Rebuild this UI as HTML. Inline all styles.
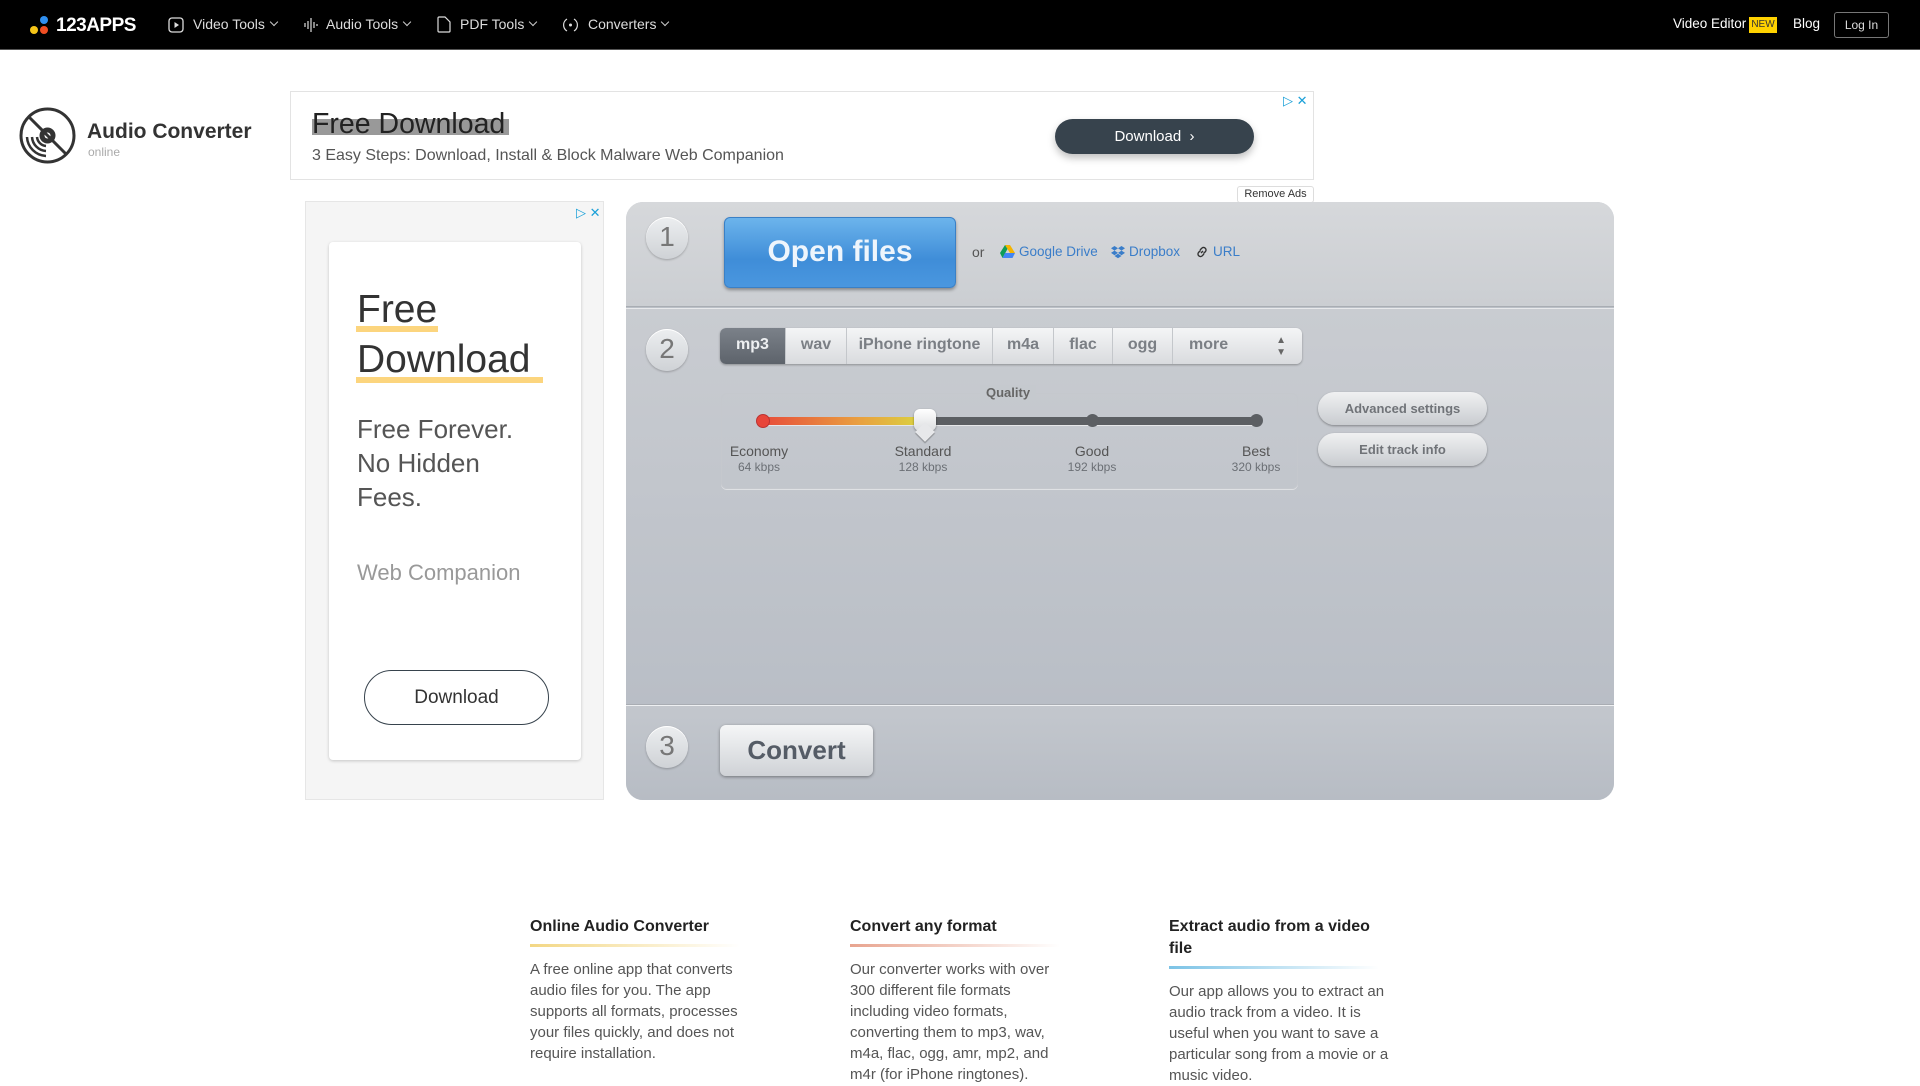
<!DOCTYPE html>
<html><head><meta charset="utf-8">
<style>
*{box-sizing:border-box;margin:0;padding:0}
body{width:1920px;height:1080px;overflow:hidden;background:#fff;font-family:"Liberation Sans",sans-serif;position:relative}
.abs{position:absolute}
.nav{left:0;top:0;width:1920px;height:50px;background:#000;border-bottom:1px solid #555}
.nav .it{position:absolute;top:16px;color:#ddd;font-size:14px;white-space:nowrap}
.chev{display:inline-block;width:6px;height:6px;border-right:1px solid #ccc;border-bottom:1px solid #ccc;transform:rotate(45deg);margin-left:6px;position:relative;top:-4px}
.step{position:absolute;left:646px;width:42px;height:42px;border-radius:50%;background:linear-gradient(#eceef0,#cfd2d6);box-shadow:0 1px 2px rgba(0,0,0,.25),inset 0 1px 0 #fff;color:#777;font-size:28px;text-align:center;line-height:40px}
.tab{position:absolute;top:0;height:36px;line-height:34px;text-align:center;font-size:16px;font-weight:bold;color:#7b7f85;border-right:1px solid #c4c7cb}
.lbl{position:absolute;text-align:center;width:120px;color:#555;font-size:14px;line-height:16px}
.lbl small{display:block;font-size:12px;color:#6b6f75}
.pill{position:absolute;left:1318px;width:169px;height:33px;border-radius:17px;background:linear-gradient(#f0f1f2,#c9ccd0);box-shadow:0 1px 2px rgba(0,0,0,.35);font-size:13px;font-weight:bold;color:#707378;text-align:center;line-height:33px}
.col{position:absolute;width:220px;font-size:15px;line-height:21px;color:#555}
.col h3{font-size:16px;color:#222;font-weight:bold;line-height:22px}
.col .ul{height:3px;margin:6px 0 12px;width:210px}
</style></head><body>

<div class="abs nav">
  <div class="abs" style="left:40px;top:16px;width:8px;height:8px;border-radius:50%;background:#2f8ff0"></div>
  <div class="abs" style="left:30px;top:26px;width:8px;height:8px;border-radius:50%;background:#f5c518"></div>
  <div class="abs" style="left:40px;top:26px;width:8px;height:8px;border-radius:50%;background:#f04e23"></div>
  <div class="abs" style="left:56px;top:15px;color:#fff;font-size:19px;font-weight:bold;letter-spacing:-0.5px">123APPS</div>
  <svg class="abs" style="left:168px;top:17px" width="16" height="16" viewBox="0 0 16 16"><rect x="1" y="1" width="14" height="14" rx="3" fill="none" stroke="#ddd" stroke-width="1.3"/><path d="M6.5 5v6l4.5-3z" fill="#ddd"/></svg>
  <div class="it" style="left:193px">Video Tools<span class="chev"></span></div>
  <svg class="abs" style="left:304px;top:17px" width="14" height="16" viewBox="0 0 14 16"><path d="M1 6v4M4 4v8M7 1v14M10 5v6M13 7v2" stroke="#ddd" stroke-width="1.2"/></svg>
  <div class="it" style="left:326px">Audio Tools<span class="chev"></span></div>
  <svg class="abs" style="left:437px;top:16px" width="14" height="17" viewBox="0 0 14 17"><path d="M1 2a1 1 0 0 1 1-1h6l5 5v9a1 1 0 0 1-1 1H2a1 1 0 0 1-1-1z" fill="none" stroke="#ddd" stroke-width="1.2"/></svg>
  <div class="it" style="left:460px">PDF Tools<span class="chev"></span></div>
  <svg class="abs" style="left:562px;top:16px" width="17" height="18" viewBox="0 0 17 18"><path d="M12 3a7 7 0 0 1 0 12M5 15A7 7 0 0 1 5 3" fill="none" stroke="#ddd" stroke-width="1.2"/><circle cx="8.5" cy="9" r="1.5" fill="#ddd"/></svg>
  <div class="it" style="left:588px">Converters<span class="chev"></span></div>
  <div class="it" style="left:1673px;color:#fff;font-size:13.5px">Video Editor</div>
  <div class="abs" style="left:1749px;top:17px;width:28px;height:16px;background:#ffd200;color:#333;font-size:10px;line-height:16px;text-align:center">NEW</div>
  <div class="it" style="left:1793px;color:#fff;font-size:13.5px">Blog</div>
  <div class="abs" style="left:1834px;top:12px;width:55px;height:26px;border:1px solid #777;border-radius:3px;color:#ddd;font-size:12px;text-align:center;line-height:24px">Log In</div>
</div>

<!-- logo -->
<svg class="abs" style="left:19px;top:107px" width="57" height="57" viewBox="0 0 57 57"><circle cx="28.5" cy="28.5" r="26.5" fill="none" stroke="#333" stroke-width="3"/><circle cx="28.5" cy="28.5" r="8" fill="#333"/><circle cx="28.5" cy="28.5" r="3" fill="#fff"/><path d="M10 10L47 47" stroke="#333" stroke-width="3"/><path d="M8 30a20 20 0 0 0 19 19M13 30a15 15 0 0 0 14 14M18 30a10 10 0 0 0 9 9" fill="none" stroke="#333" stroke-width="2.5"/></svg>
<div class="abs" style="left:87px;top:120px;font-size:21px;font-weight:bold;color:#333">Audio Converter</div>
<div class="abs" style="left:88px;top:145px;font-size:12px;color:#aaa">online</div>

<!-- top ad -->
<div class="abs" style="left:290px;top:91px;width:1024px;height:89px;border:1px solid #e3e3e3;background:#fff">
  <div class="abs" style="left:21px;top:27px;width:197px;height:16px;background:#999"></div>
  <div class="abs" style="left:21px;top:16px;font-size:28.5px;color:#222">Free Download</div>
  <div class="abs" style="left:21px;top:55px;font-size:16px;color:#555">3 Easy Steps: Download, Install &amp; Block Malware Web Companion</div>
  <div class="abs" style="left:764px;top:27px;width:199px;height:35px;border-radius:18px;background:#37434d;box-shadow:0 4px 8px rgba(0,0,0,.25);color:#fff;font-size:15px;text-align:center;line-height:35px">Download &nbsp;›</div>
  <div class="abs" style="left:992px;top:1px;color:#1ba0d8;font-size:13px">▷ ✕</div>
</div>
<div class="abs" style="left:1237px;top:186px;width:77px;height:17px;border:1px solid #ddd;border-radius:3px;font-size:11px;color:#333;text-align:center;line-height:15px">Remove Ads</div>

<!-- left ad -->
<div class="abs" style="left:305px;top:201px;width:299px;height:599px;background:#f5f5f5;border:1px solid #e6e6e6">
  <div class="abs" style="left:270px;top:3px;color:#1ba0d8;font-size:13px">▷ ✕</div>
  <div class="abs" style="left:23px;top:40px;width:252px;height:518px;background:#fff;border-radius:4px;box-shadow:0 1px 3px rgba(0,0,0,.2)">
    <div class="abs" style="left:27px;top:84px;width:82px;height:6px;background:#fcd57e"></div>
    <div class="abs" style="left:27px;top:135px;width:187px;height:6px;background:#fcd57e"></div>
    <div class="abs" style="left:28px;top:43px;font-size:39px;line-height:50px;color:#333">Free<br>Download</div>
    <div class="abs" style="left:28px;top:170px;font-size:26px;line-height:34px;color:#555">Free Forever.<br>No Hidden<br>Fees.</div>
    <div class="abs" style="left:28px;top:318px;font-size:22px;color:#999">Web Companion</div>
    <div class="abs" style="left:35px;top:428px;width:185px;height:55px;border:1px solid #37434d;border-radius:28px;font-size:19px;text-align:center;line-height:53px;color:#333">Download</div>
  </div>
</div>

<!-- converter -->
<div class="abs" style="left:626px;top:202px;width:988px;height:598px;border-radius:17px;overflow:hidden;background:#bbc0c7">
  <div class="abs" style="left:0;top:0;width:988px;height:105px;background:linear-gradient(#d6d8db,#cbced2);border-bottom:1px solid #a9adb3"></div>
  <div class="abs" style="left:0;top:106px;width:988px;height:1px;background:#e8e9eb"></div>
  <div class="abs" style="left:0;top:107px;width:988px;height:395px;background:linear-gradient(#c9ccd1,#b9bec6)"></div>
  <div class="abs" style="left:0;top:502px;width:988px;height:1px;background:#a9adb3"></div>
  <div class="abs" style="left:0;top:503px;width:988px;height:1px;background:#eef0f2"></div>
  <div class="abs" style="left:0;top:504px;width:988px;height:94px;background:linear-gradient(#c3c7cd,#b7bcc4)"></div>
</div>
<div class="step" style="top:217px">1</div>
<div class="step" style="top:329px">2</div>
<div class="step" style="top:726px">3</div>

<div class="abs" style="left:724px;top:217px;width:232px;height:71px;border-radius:6px;background:linear-gradient(#6cb4ec,#3f8dd8 60%,#4a97df);box-shadow:0 2px 3px rgba(0,0,0,.35);border:1px solid #3a80c6;color:#eef5fc;font-size:30px;font-weight:bold;text-align:center;line-height:68px">Open files</div>
<div class="abs" style="left:972px;top:244px;font-size:14px;color:#555">or</div>
<svg class="abs" style="left:1000px;top:245px" width="15" height="13" viewBox="0 0 15 13"><path d="M5 0h5l5 8h-5z" fill="#f5b400"/><path d="M5 0L0 8l2.5 5L7.5 4z" fill="#0f9d58"/><path d="M2.5 13h10L15 8H5z" fill="#4285f4"/></svg>
<div class="abs" style="left:1019px;top:244px;font-size:13.5px;color:#3a7dc9">Google Drive</div>
<svg class="abs" style="left:1111px;top:245px" width="14" height="14" viewBox="0 0 14 14"><path d="M3.5 1L0 3.3 3.5 5.6 7 3.3zM10.5 1L7 3.3l3.5 2.3L14 3.3zM0 7.9l3.5 2.3L7 7.9 3.5 5.6zM10.5 5.6L7 7.9l3.5 2.3L14 7.9zM3.5 11L7 13.3 10.5 11 7 8.7z" fill="#3a7dc9"/></svg>
<div class="abs" style="left:1129px;top:244px;font-size:13.5px;color:#3a7dc9">Dropbox</div>
<svg class="abs" style="left:1195px;top:245px" width="14" height="14" viewBox="0 0 14 14"><path d="M6 8l2-2M5 5l2-2a2.5 2.5 0 0 1 3.5 3.5l-2 2M9 9l-2 2a2.5 2.5 0 0 1-3.5-3.5l2-2" fill="none" stroke="#333" stroke-width="1.4"/></svg>
<div class="abs" style="left:1213px;top:244px;font-size:13.5px;color:#3a7dc9">URL</div>

<!-- tabs -->
<div class="abs" style="left:720px;top:328px;width:582px;height:36px;border-radius:6px;background:linear-gradient(#f4f5f6,#d9dbde);box-shadow:0 1px 2px rgba(0,0,0,.3);overflow:hidden">
  <div class="tab" style="left:0;width:66px;background:linear-gradient(#7b8189,#5d636b);color:#eef0f2">mp3</div>
  <div class="tab" style="left:66px;width:61px">wav</div>
  <div class="tab" style="left:127px;width:146px">iPhone ringtone</div>
  <div class="tab" style="left:273px;width:61px">m4a</div>
  <div class="tab" style="left:334px;width:59px">flac</div>
  <div class="tab" style="left:393px;width:60px">ogg</div>
  <div class="tab" style="left:453px;width:129px;border:none;text-align:left;padding-left:16px">more<span style="position:absolute;right:16px;top:0;font-size:10px;line-height:12px;padding-top:7px;color:#666">▲<br>▼</span></div>
</div>

<!-- quality -->
<div class="abs" style="left:721px;top:393px;width:577px;height:96px;border:1px solid #c5c8cd;border-radius:6px;box-shadow:0 1px 0 #dfe1e4"></div>
<div class="abs" style="left:980px;top:385px;padding:0 6px;background:#c5c9ce;font-size:13px;font-weight:bold;color:#666">Quality</div>
<div class="abs" style="left:760px;top:417px;width:498px;height:8px;border-radius:4px;background:#5c5f63;box-shadow:0 1px 0 #e6e7e9"></div>
<div class="abs" style="left:760px;top:417px;width:166px;height:8px;border-radius:4px;background:linear-gradient(90deg,#e84a3a,#e9a040 60%,#d9d640)"></div>
<div class="abs" style="left:756px;top:414px;width:14px;height:14px;border-radius:50%;background:#e8453a;border:1px solid #b33"></div>
<div class="abs" style="left:1086px;top:414px;width:13px;height:13px;border-radius:50%;background:#5c5f63"></div>
<div class="abs" style="left:1250px;top:414px;width:13px;height:13px;border-radius:50%;background:#5c5f63"></div>
<div class="abs" style="left:914px;top:409px;width:22px;height:22px;border-radius:6px;background:linear-gradient(#fff,#dcdee0);box-shadow:0 1px 2px rgba(0,0,0,.4)"></div>
<div class="abs" style="left:918px;top:425px;width:14px;height:14px;transform:rotate(45deg);background:#e7e8ea;box-shadow:1px 1px 1px rgba(0,0,0,.3)"></div>
<div class="lbl" style="left:699px;top:443px">Economy<small>64 kbps</small></div>
<div class="lbl" style="left:863px;top:443px">Standard<small>128 kbps</small></div>
<div class="lbl" style="left:1032px;top:443px">Good<small>192 kbps</small></div>
<div class="lbl" style="left:1196px;top:443px">Best<small>320 kbps</small></div>

<div class="pill" style="top:392px">Advanced settings</div>
<div class="pill" style="top:433px">Edit track info</div>

<div class="abs" style="left:720px;top:725px;width:153px;height:51px;border-radius:6px;background:linear-gradient(#f5f6f7,#cfd2d6);box-shadow:0 1px 3px rgba(0,0,0,.4);color:#555c66;font-size:26px;font-weight:bold;text-align:center;line-height:50px">Convert</div>

<!-- bottom -->
<div class="col" style="left:530px;top:916px"><h3>Online Audio Converter</h3><div class="ul" style="background:linear-gradient(90deg,#f3d784,#fff)"></div>A free online app that converts audio files for you. The app supports all formats, processes your files quickly, and does not require installation.</div>
<div class="col" style="left:850px;top:916px"><h3>Convert any format</h3><div class="ul" style="background:linear-gradient(90deg,#e8a48f,#fff)"></div>Our converter works with over 300 different file formats including video formats, converting them to mp3, wav, m4a, flac, ogg, amr, mp2, and m4r (for iPhone ringtones).</div>
<div class="col" style="left:1169px;top:916px"><h3>Extract audio from a video file</h3><div class="ul" style="background:linear-gradient(90deg,#7cc3e6,#fff)"></div>Our app allows you to extract an audio track from a video. It is useful when you want to save a particular song from a movie or a music video.</div>

</body></html>
